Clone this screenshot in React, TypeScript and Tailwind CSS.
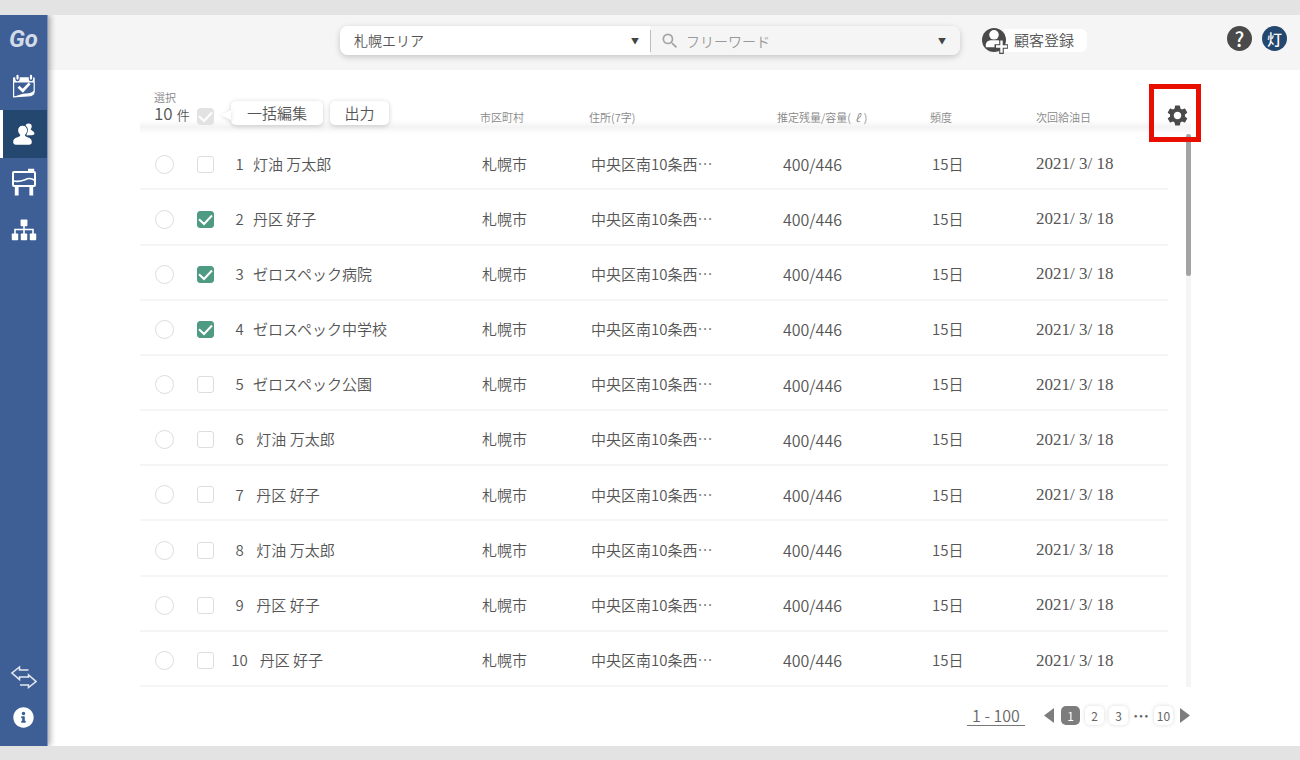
import { ReactNode, useState } from 'react';
import { FaInfoCircle } from 'react-icons/fa';
import { MdSearch, MdSettings } from 'react-icons/md';

interface Customer {
  id: number;
  name: string;
  city: string;
  address: string;
  tank: string;
  frequency: string;
  nextDate: string;
}

interface NavItem {
  label: string;
  icon: ReactNode;
  active?: boolean;
}

const names = [
  '灯油 万太郎',
  '丹区 好子',
  'ゼロスペック病院',
  'ゼロスペック中学校',
  'ゼロスペック公園',
  ' 灯油 万太郎',
  ' 丹区 好子',
  ' 灯油 万太郎',
  ' 丹区 好子',
  '  丹区 好子',
];

const customers: Customer[] = names.map((name, index) => ({
  id: index + 1,
  name,
  city: '札幌市',
  address: '中央区南10条西⋯',
  tank: '400/446',
  frequency: '15日',
  nextDate: '2021/ 3/ 18',
}));

function CalendarIcon() {
  return (
    <svg viewBox="0 0 24 24" className="size-6" fill="none">
      <path d="M1 4.5Q1 3.3 2.2 3.3H21.5Q22.7 3.3 22.7 4.5V8.5H1Z" fill="#fff" />
      <path d="M1.6 8V22.8L18.5 21.6Q22 21 22.2 17.5V8" stroke="#fff" strokeWidth="1.2" />
      <path d="M2 22.8Q9 19.5 14 19.4Q19 19.6 22 16.5Q22 21 18.5 21.6Z" fill="#fff" />
      <path d="M5.5 1.5V5M19 1.5V5" stroke="#3e5f95" strokeWidth="4.4" strokeLinecap="round" />
      <path d="M5.5 1.8V4.6M19 1.8V4.6" stroke="#fff" strokeWidth="2.2" strokeLinecap="round" />
      <path d="M6.5 12.8L10.8 16.8L17.6 9.4" stroke="#fff" strokeWidth="2.8" />
    </svg>
  );
}

function UsersIcon() {
  return (
    <svg viewBox="0 0 24 24" className="size-6" fill="#fff">
      <circle cx="16.6" cy="4.6" r="3.1" />
      <path d="M14.5 6H18.2C18 8.600 22.400 8.600 22.400 11.600C22.400 13.200 21 13.400 14.500 13.400Z" />
      <path
        d="M10.600 3.700C13.600 3.700 15.200 5.800 15.100 8.500C15 10.400 14 11.800 12.900 12.800C12.700 15.800 19.800 14.600 19.800 19.800C19.800 22 18.800 22.700 17 22.700H4C2.200 22.700 1.200 22 1.200 19.800C1.200 14.600 8.500 15.800 8.300 12.800C7.200 11.800 6.200 10.400 6.100 8.500C6 5.800 7.600 3.700 10.600 3.700Z"
        stroke="#24476f"
        strokeWidth="1.600"
        paintOrder="stroke"
      />
    </svg>
  );
}

function TankIcon() {
  return (
    <svg viewBox="0 0 26 28" className="h-7 w-[26px]" fill="none" stroke="#fff">
      <rect x="2" y="4" width="22" height="14" rx="1" strokeWidth="2" />
      <path d="M17 2H22V4" strokeWidth="2.4" />
      <path d="M2 12.8C8 14.5 11 12.8 14.5 11.5C17.5 10 20 9.8 24 12.5" strokeWidth="1.6" />
      <path d="M5.7 18.5V27.5M20.3 18.5V27.5" strokeWidth="3.8" />
    </svg>
  );
}

function SitemapIcon() {
  return (
    <svg viewBox="0 0 26 22" className="h-[22px] w-[26px]" fill="#fff">
      <rect x="9.6" y="0.500" width="6.800" height="6.800" rx="0.8" />
      <rect x="0.8" y="14.500" width="6.400" height="6.800" rx="0.8" />
      <rect x="9.800" y="14.500" width="6.400" height="6.800" rx="0.8" />
      <rect x="18.800" y="14.500" width="6.400" height="6.800" rx="0.8" />
      <path d="M13 7V15M4 15V10.500H22V15" fill="none" stroke="#fff" strokeWidth="1.600" />
    </svg>
  );
}

function SwapIcon() {
  return (
    <svg viewBox="0 0 26 24" className="h-6 w-[26px]" fill="none" stroke="#e3e8f1" strokeWidth="1.5">
      <path d="M17.500 5H8.500V2L1 8L8.500 14.500V12H18" />
      <path d="M9 20H17.500V22.500L25 16.500L17.500 10V12.500" />
    </svg>
  );
}

function AddCustomerIcon() {
  return (
    <svg viewBox="0 0 26 26" className="relative size-[26px] shrink-0">
      <circle cx="12" cy="12" r="12" fill="#4a4a4a" />
      <circle cx="12" cy="6.8" r="4.8" fill="#fff" />
      <path d="M3.8 16.5Q4.5 12.500 8.500 12.200H15.500Q19.500 12.500 20 16V19.300H3.800Z" fill="#fff" />
      <path d="M19.500 11V26M12.500 18.500H26" stroke="#4a4a4a" strokeWidth="4.600" />
      <path d="M19.500 12.500V24.800M14 18.500H25.200" stroke="#fff" strokeWidth="2.400" />
    </svg>
  );
}

function Triangle({ direction }: { direction: 'left' | 'right' }) {
  return (
    <svg viewBox="0 0 10 15" className="h-[15px] w-2.5" fill="#7d7d7d">
      <path d={direction === 'left' ? 'M10 0V15L0 7.5Z' : 'M0 0V15L10 7.5Z'} />
    </svg>
  );
}

function CheckMark() {
  return (
    <svg viewBox="0 0 17 17" className="pointer-events-none absolute inset-0 size-[17px]" fill="none">
      <path d="M2 8.2L7 13L15 4.5" stroke="#fff" strokeWidth="2" />
    </svg>
  );
}

const mainNav: NavItem[] = [
  { label: '配送計画', icon: <CalendarIcon /> },
  { label: '顧客', icon: <UsersIcon />, active: true },
  { label: 'タンク', icon: <TankIcon /> },
  { label: '組織', icon: <SitemapIcon /> },
];

function Sidebar() {
  return (
    <aside className="relative z-10 flex w-12 shrink-0 flex-col border-r border-[#7f95bb] bg-[#3e5f95] shadow-[2px_0_6px_rgba(0,0,0,0.35)]">
      <div className="flex h-[47px] items-center justify-center font-[Roboto,sans-serif] text-2xl font-bold text-[#d3dbe8] italic">
        Go
      </div>
      <nav className="flex flex-col">
        {mainNav.map((item) => (
          <a
            key={item.label}
            href="#"
            aria-label={item.label}
            className={`flex h-12 items-center justify-center ${
              item.active ? 'border-l-3 border-white bg-[#24476f] pr-[3px]' : ''
            }`}
          >
            {item.icon}
          </a>
        ))}
      </nav>
      <div className="mt-auto flex flex-col pb-2">
        <button aria-label="切り替え" className="flex h-[41px] items-center justify-center">
          <SwapIcon />
        </button>
        <button aria-label="情報" className="flex h-[41px] items-center justify-center">
          <FaInfoCircle className="size-[21px] text-white" />
        </button>
      </div>
    </aside>
  );
}

function Header() {
  return (
    <header className="flex h-[55px] shrink-0 items-center bg-[#f5f5f5] pr-[13px] pb-1 pl-[292px]">
      <div className="flex h-[29px] max-w-[620px] flex-1 items-center rounded-lg text-sm shadow-[0_2px_6px_rgba(0,0,0,0.2)]">
        <div className="relative h-full w-1/2">
          <select
            aria-label="エリア"
            className="h-full w-full appearance-none rounded-l-lg bg-white pb-0.5 pl-3.5 text-[#555]"
          >
            <option>札幌エリア</option>
          </select>
          <span className="pointer-events-none absolute top-1 right-[11px] text-[8px] leading-[22px] text-[#444]">
            ▼
          </span>
        </div>
        <div className="relative flex h-full w-1/2 items-center gap-1.5 rounded-r-lg bg-[#f5f5f5] pl-2.5">
          <span className="absolute left-0 h-[22px] w-px bg-[#bbb]" />
          <MdSearch className="size-5 shrink-0 text-[#a5a5a5]" />
          <input
            aria-label="フリーワード"
            placeholder="フリーワード"
            className="min-w-0 flex-1 bg-transparent outline-none placeholder:text-[#999]"
          />
          <span className="pointer-events-none absolute top-1 right-3.5 text-[8px] leading-[22px] text-[#444]">
            ▼
          </span>
        </div>
      </div>

      <button className="ml-[22px] flex items-center text-[15px] text-[#555]">
        <AddCustomerIcon />
        <span className="-ml-1 flex h-[23px] items-center rounded-r-md bg-white pr-[13px] pl-2.5">顧客登録</span>
      </button>

      <div className="ml-auto flex gap-2.5 pb-1">
        <button
          aria-label="ヘルプ"
          className="size-[25px] rounded-full bg-[#4a4a4a] text-xl leading-[25px] font-medium text-white"
        >
          ?
        </button>
        <button className="size-[25px] rounded-full bg-[#24476f] text-[15px] leading-6 font-medium text-white">
          灯
        </button>
      </div>
    </header>
  );
}

function BulkActions() {
  const button =
    'h-6 rounded-[5px] bg-white text-[15px] leading-[22px] text-[#555] shadow-[0_1px_5px_rgba(0,0,0,0.2)]';

  return (
    <div className="flex items-end pl-3.5">
      <div className="w-[43px] whitespace-nowrap">
        <p className="text-[11px] leading-3 text-[#888]">選択</p>
        <p className="flex items-baseline gap-1 text-[17px] leading-5 text-[#555]">
          10 <span className="text-[13px]">件</span>
        </p>
      </div>
      <label className="relative size-[17px]">
        <input
          type="checkbox"
          aria-label="すべて選択"
          defaultChecked
          className="block size-[17px] appearance-none rounded-[4px] bg-[#e2e2e2]"
        />
        <CheckMark />
      </label>
      <svg viewBox="0 0 10 12" className="mb-1 ml-[7px] h-3 w-2.5 drop-shadow-[0_1px_2px_rgba(0,0,0,0.15)]">
        <path d="M0 6L10 1V11Z" fill="#fff" />
      </svg>
      <button className={`${button} w-[92px]`}>一括編集</button>
      <button className={`${button} ml-[7px] w-[59px]`}>出力</button>
    </div>
  );
}

function CustomerTable() {
  const [checked, setChecked] = useState<number[]>([2, 3, 4]);

  const toggle = (id: number) =>
    setChecked((prev) => (prev.includes(id) ? prev.filter((v) => v !== id) : [...prev, id]));

  return (
    <table className="h-[617px] w-full table-fixed text-left text-[15px] text-[#555]">
      <colgroup>
        <col className="w-[50px]" />
        <col className="w-[36px]" />
        <col className="w-[27px]" />
        <col className="w-[227px]" />
        <col className="w-[109px]" />
        <col className="w-[188px]" />
        <col className="w-[153px]" />
        <col className="w-[106px]" />
        <col className="w-[132px]" />
      </colgroup>
      <thead>
        <tr className="h-[66px] bg-[linear-gradient(to_bottom,#fff_50px,#f3f3f3_57px,#fff_64px)] align-bottom text-[11px] leading-4 text-[#888] [&>th]:pb-[11px] [&>th]:font-[350]">
          <th colSpan={4}>
            <BulkActions />
          </th>
          <th>市区町村</th>
          <th>住所(7字)</th>
          <th>
            推定残量/容量(<span className="mx-1 italic">ℓ</span>)
          </th>
          <th>頻度</th>
          <th>次回給油日</th>
        </tr>
      </thead>
      <tbody>
        {customers.map((customer) => (
          <tr key={customer.id} className="border-b-2 border-[#f5f5f5] [&>td]:pt-1">
            <td className="pl-[15px]">
              <input
                type="radio"
                name="customer"
                aria-label={`${customer.name.trim()}を表示`}
                className="block size-[19px] appearance-none rounded-full border border-[#ddd]"
              />
            </td>
            <td className="pl-[7px]">
              <label className="relative block size-[17px]">
                <input
                  type="checkbox"
                  aria-label={`${customer.name.trim()}を選択`}
                  checked={checked.includes(customer.id)}
                  onChange={() => toggle(customer.id)}
                  className="block size-[17px] appearance-none rounded-[3px] border border-[#ddd] checked:border-[#4f9a83] checked:bg-[#4f9a83]"
                />
                {checked.includes(customer.id) && <CheckMark />}
              </label>
            </td>
            <td className="text-center">{customer.id}</td>
            <td className="whitespace-pre">{customer.name}</td>
            <td className="pl-0.5">{customer.city}</td>
            <td className="pl-0.5">{customer.address}</td>
            <td className="pl-1.5 text-base">{customer.tank}</td>
            <td className="pl-0.5">{customer.frequency}</td>
            <td className="font-['Liberation_Serif',serif] text-[17px]">{customer.nextDate}</td>
          </tr>
        ))}
      </tbody>
    </table>
  );
}

function Pagination() {
  const page = 'size-[19px] rounded-[5px] text-center text-xs leading-[19px] font-normal';

  return (
    <nav className="flex items-center justify-end pt-[18px] pr-px text-[#666]">
      <button className="mr-[19px] h-[21px] w-[58px] border-b border-[#777] text-base leading-5">1 - 100</button>
      <button aria-label="前へ">
        <Triangle direction="left" />
      </button>
      <div className="mx-[7px] flex items-center gap-[5px]">
        <button className={`${page} bg-[#7d7d7d] text-white`}>1</button>
        <button className={`${page} bg-white shadow-[0_0_4px_rgba(0,0,0,0.15)]`}>2</button>
        <button className={`${page} bg-white shadow-[0_0_4px_rgba(0,0,0,0.15)]`}>3</button>
        <span className="w-4 text-center leading-[19px] font-bold">⋯</span>
        <button className={`${page} bg-white shadow-[0_0_4px_rgba(0,0,0,0.15)]`}>10</button>
      </div>
      <button aria-label="次へ">
        <Triangle direction="right" />
      </button>
    </nav>
  );
}

export default function App() {
  return (
    <div className="flex min-h-screen overflow-hidden border-t-[15px] border-b-[14px] border-[#e3e3e3] bg-white font-['Noto_Sans_CJK_JP',sans-serif] font-[350]">
      <Sidebar />
      <div className="flex min-w-0 flex-1 flex-col">
        <Header />
        <main className="flex-1 pr-[109px] pl-[92px]">
          <div className="flex">
            <div className="min-w-0 flex-1">
              <CustomerTable />
            </div>
            <div className="flex w-[23px] flex-col">
              <div className="relative h-16 bg-[linear-gradient(to_bottom,#fff_50px,#f3f3f3_57px,#fff_64px)]">
                <button
                  aria-label="表示設定"
                  className="absolute top-3.5 -left-[19px] flex h-[58px] w-[52px] items-center justify-center border-5 border-[#e80f00] pt-1 pl-1"
                >
                  <MdSettings className="size-[25px] shrink-0 text-[#4a4a4a]" />
                </button>
              </div>
              <div className="ml-auto w-[5px] flex-1 bg-[#f5f5f5]">
                <div className="h-[142px] rounded-full bg-[#a3a3a3]" />
              </div>
            </div>
          </div>
          <Pagination />
        </main>
      </div>
    </div>
  );
}
